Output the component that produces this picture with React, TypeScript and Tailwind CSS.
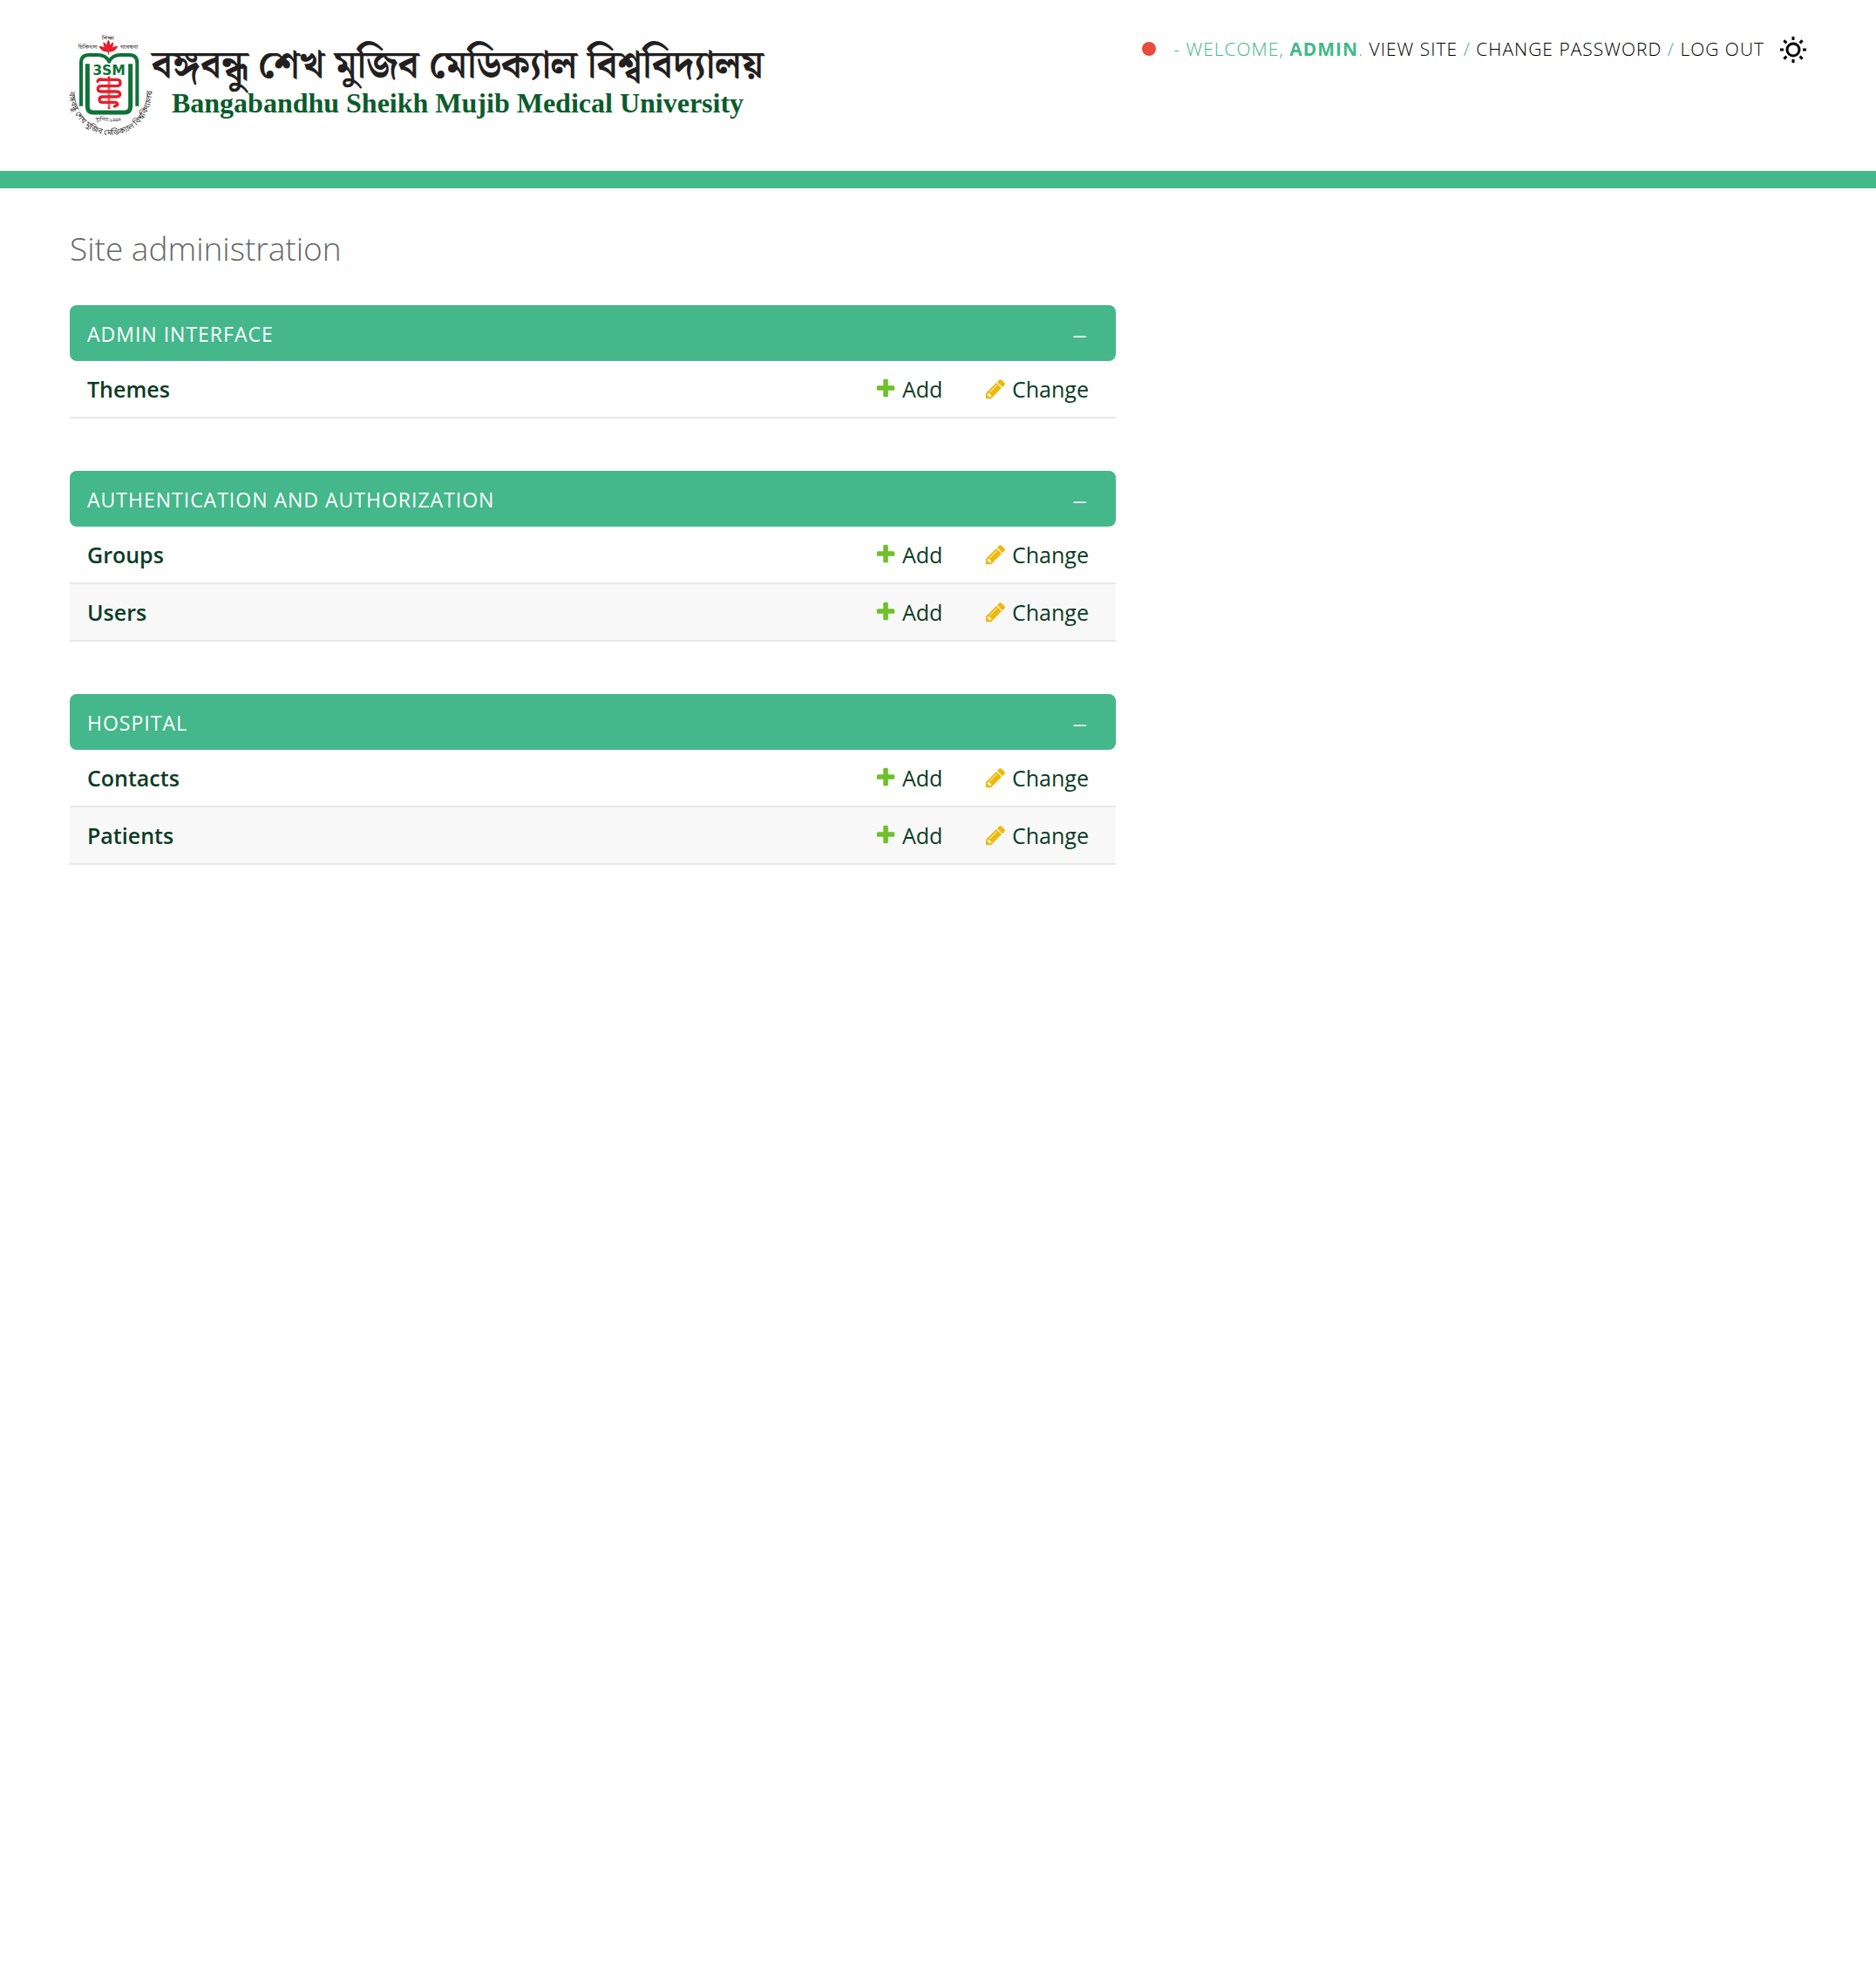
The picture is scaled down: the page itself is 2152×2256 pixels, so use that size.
import { useState } from "react";
import type { ReactNode } from "react";

type Model = { name: string };
type AppModule = { title: string; models: Model[] };

const modules: AppModule[] = [
  { title: "Admin Interface", models: [{ name: "Themes" }] },
  {
    title: "Authentication and Authorization",
    models: [{ name: "Groups" }, { name: "Users" }],
  },
  { title: "Hospital", models: [{ name: "Contacts" }, { name: "Patients" }] },
];

function Emblem() {
  return (
    <svg viewBox="30 30 288 348" className="-mr-0.5 h-[116px] w-24 shrink-0 overflow-visible" aria-hidden="true">
      <defs>
        <path id="ring" d="M29 225 A142 150 0 0 0 313 225" />
      </defs>
      <g fill="#3a3a3a" fontFamily='"Noto Sans Bengali", "Noto Serif Bengali", sans-serif' fontWeight="400">
        <text x="162" y="48" fontSize="20" textAnchor="middle">শিক্ষা</text>
        <text x="92" y="78" fontSize="20" textAnchor="middle">চিকিৎসা</text>
        <text x="234" y="78" fontSize="20" textAnchor="middle">গবেষণা</text>
        <text x="163" y="328" fontSize="17" textAnchor="middle">স্থাপিত:১৯৯৮</text>
        <text fontSize="28">
          <textPath href="#ring">বঙ্গবন্ধু শেখ মুজিব মেডিক্যাল বিশ্ববিদ্যালয়</textPath>
        </text>
      </g>
      <g fill="none" stroke="#0f7238" strokeLinejoin="round">
        <path strokeWidth="12" d="M69 275V126Q69 99 96 99H126Q155 99 165.500 122Q176 99 205 99H235Q262 99 262 126V275" />
        <path strokeWidth="15" d="M91 130V276Q91 297 112 297H218Q239 297 239 276V130" />
      </g>
      <text x="165" y="168" fontSize="47" fontFamily='"DejaVu Sans", sans-serif' fontWeight="700" fill="#0f7238" textAnchor="middle">3SM</text>
      <g fill="#e3202c">
        <path d="M163 47Q176 62 163 86Q150 62 163 47z" />
        <path d="M145 54Q162 62 163 88Q146 78 145 54zM181 54Q164 62 163 88Q180 78 181 54z" />
        <path d="M130 69Q152 66 163 88Q142 92 130 69zM196 69Q174 66 163 88Q184 92 196 69z" />
        <path d="M160 84h6l-2 14h-2z" />
      </g>
      <path d="M165 173v112" stroke="#e3202c" strokeWidth="8" />
      <g fill="none" stroke="#e3202c" strokeWidth="10" strokeLinecap="round">
        <path d="M134 184H194Q204 185 204 195T194 206H137Q127 207 127 216T137 225H192Q203 226 203 234T192 243H141Q132 244 132 253T141 262H186Q196 263 194 271L184 276" />
        <path d="M126 190Q130 180 142 184" />
      </g>
      <path d="M165 190v11M165 211v9M165 230v8M165 248v9M165 267v13" stroke="#fff" strokeWidth="2" />
    </svg>
  );
}

function PlusIcon() {
  return (
    <svg viewBox="0 0 1792 1792" className="size-[26px] shrink-0" fill="#70bf2b" aria-hidden="true">
      <path d="M1600 736v192q0 40-28 68t-68 28h-416v416q0 40-28 68t-68 28h-192q-40 0-68-28t-28-68v-416h-416q-40 0-68-28t-28-68v-192q0-40 28-68t68-28h416v-416q0-40 28-68t68-28h192q40 0 68 28t28 68v416h416q40 0 68 28t28 68z" />
    </svg>
  );
}

function PencilIcon() {
  return (
    <svg viewBox="0 0 1792 1792" className="size-[26px] shrink-0" fill="#efb80b" aria-hidden="true">
      <path d="M491 1536l91-91-235-235-91 91v107h128v128h107zm523-928q0-22-22-22-10 0-17 7l-542 542q-7 7-7 17 0 22 22 22 10 0 17-7l542-542q7-7 7-17zm-54-192l416 416-832 832h-416v-416zm683 96q0 53-37 90l-166 166-416-416 166-165q36-38 90-38 53 0 91 38l235 234q37 39 37 91z" />
    </svg>
  );
}

function SunIcon() {
  return (
    <svg viewBox="0 0 30 30" className="size-[30px]" fill="none" stroke="#000" strokeWidth="3" aria-hidden="true">
      <circle cx="15" cy="15" r="7" />
      <path d="M15 0v4M15 26v4M0 15h4M26 15h4M4.400 4.400l3 3M22.600 22.600l3 3M25.600 4.400l-3 3M7.400 22.600l-3 3" />
    </svg>
  );
}

function ToolLink({ children }: { children: ReactNode }) {
  return (
    <a href="#" className="text-black hover:underline">
      {children}
    </a>
  );
}

function Header() {
  return (
    <header className="flex items-start justify-between border-b-20 border-[#44b78b] px-20 py-10">
      <a href="#" aria-label="Bangabandhu Sheikh Mujib Medical University" className="flex items-start">
        <Emblem />
        <span className="flex flex-col items-center pt-2 whitespace-nowrap">
          <span
            lang="bn"
            className="font-['Noto_Serif_Bengali','Noto_Sans_Bengali',serif] text-[44px] leading-[56px] font-bold text-[#231f20]"
          >
            বঙ্গবন্ধু শেখ মুজিব মেডিক্যাল বিশ্ববিদ্যালয়
          </span>
          <span className="font-['Liberation_Serif',serif] text-[32px] leading-7 font-bold text-[#0b5c2b]">
            Bangabandhu Sheikh Mujib Medical University
          </span>
        </span>
      </a>
      <div className="flex items-start text-[21px] leading-8 font-light tracking-[1px] whitespace-nowrap text-[#44b78b] uppercase">
        <span className="mt-2 mr-5 size-4 rounded-full bg-[#e74c3c]" />
        <nav>
          - Welcome, <strong className="font-bold">admin</strong>. <ToolLink>View site</ToolLink> /{" "}
          <ToolLink>Change password</ToolLink> / <ToolLink>Log out</ToolLink>
        </nav>
        <button type="button" aria-label="Toggle theme" className="mt-0.5 ml-4.5 cursor-pointer">
          <SunIcon />
        </button>
      </div>
    </header>
  );
}

function ModuleTable({ module }: { module: AppModule }) {
  const [open, setOpen] = useState(true);
  return (
    <section className="mb-15">
      <h2 className="flex h-16 items-center justify-between rounded-lg bg-[#44b78b] pt-0.5 pr-8 pl-5 text-[23px] font-normal tracking-[1px] text-white uppercase">
        <a href="#">{module.title}</a>
        <button
          type="button"
          aria-expanded={open}
          aria-label={`Toggle ${module.title}`}
          className="cursor-pointer text-[34px] leading-8 font-light"
          onClick={() => setOpen(!open)}
        >
          –
        </button>
      </h2>
      {open && (
        <table className="w-full border-separate border-spacing-0 text-[25px] leading-8 text-[#0c3c26]">
          <tbody>
            {module.models.map((model) => (
              <tr key={model.name} className="h-[66px] even:bg-[#f8f8f8]">
                <th scope="row" className="border-b-2 border-[#e8e8e8] pl-5 text-left font-semibold">
                  <a href="#">{model.name}</a>
                </th>
                <td className="w-[126px] border-b-2 border-[#e8e8e8]">
                  <a href="#" className="flex items-center gap-1.5">
                    <PlusIcon />
                    Add
                  </a>
                </td>
                <td className="w-[151px] border-b-2 border-[#e8e8e8]">
                  <a href="#" className="flex items-center gap-1.5">
                    <PencilIcon />
                    Change
                  </a>
                </td>
              </tr>
            ))}
          </tbody>
        </table>
      )}
    </section>
  );
}

export default function App() {
  return (
    <div className="min-h-screen bg-white font-['Open_Sans',sans-serif]">
      <Header />
      <main className="px-20 pt-10">
        <h1 className="mb-9 text-[37px] leading-[58px] font-light text-[#666]">Site administration</h1>
        <div className="max-w-[1200px]">
          {modules.map((module) => (
            <ModuleTable key={module.title} module={module} />
          ))}
        </div>
      </main>
    </div>
  );
}
